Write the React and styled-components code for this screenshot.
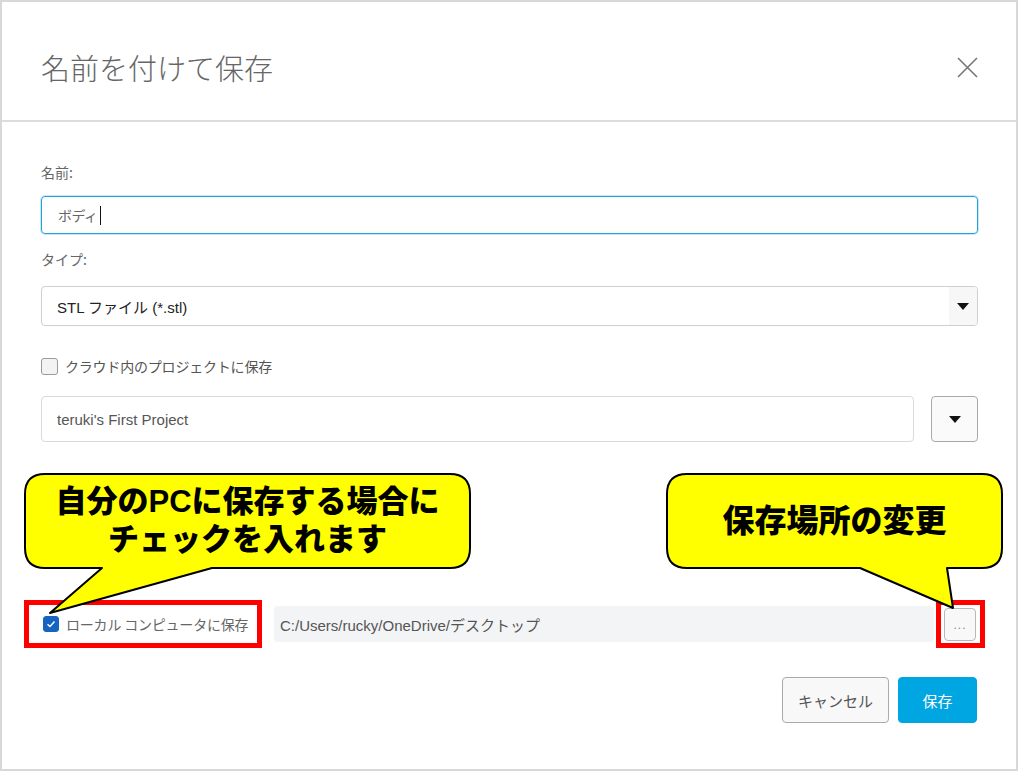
import React from "react";
import styled, { createGlobalStyle } from "styled-components";

const GlobalStyle = createGlobalStyle`
  html, body {
    margin: 0;
    padding: 0;
    background: #ffffff;
  }
  body {
    font-family: "Liberation Sans", "Noto Sans CJK JP", sans-serif;
  }
  * {
    box-sizing: border-box;
  }
`;

const Page = styled.div`
  position: relative;
  width: 1019px;
  height: 773px;
  overflow: hidden;
`;

const Frame = styled.div`
  width: 1018px;
  height: 771px;
  border: 2px solid #d8d8d8;
  background: #fff;
  display: flex;
  flex-direction: column;
`;

const Header = styled.div`
  height: 120px;
  flex-shrink: 0;
  border-bottom: 2px solid #dcdcdc;
  display: flex;
  align-items: center;
  justify-content: space-between;
  padding: 12px 38px 0 39px;
`;

const Title = styled.h1`
  margin: 0;
  font-family: "Noto Sans CJK JP", sans-serif;
  font-weight: 300;
  font-size: 29px;
  color: #666;
`;

const CloseButton = styled.button`
  width: 22px;
  height: 22px;
  padding: 0;
  border: none;
  background: none;
  display: flex;
  align-items: center;
  justify-content: center;
`;

const Body = styled.div`
  flex: 1;
  display: flex;
  flex-direction: column;
  padding: 40px 38px 0 39px;
`;

const Label = styled.div`
  font-family: "Noto Sans CJK JP", sans-serif;
  font-size: 14px;
  line-height: 20px;
  color: #666;
  margin-top: ${(p) => p.$mt || 0}px;
`;

const TextBox = styled.div`
  margin-top: 14px;
  height: 38px;
  border: 1px solid #22a2dc;
  border-radius: 4px;
  box-shadow: 0 0 0 1px rgba(34, 162, 220, 0.25);
  display: flex;
  align-items: center;
  padding-left: 16px;
  font-family: "Noto Sans CJK JP", sans-serif;
  font-size: 14px;
  letter-spacing: -0.5px;
  color: #666;
`;

const Caret = styled.span`
  display: inline-block;
  width: 1px;
  height: 19px;
  background: #111;
  margin-left: 2px;
`;

const Select = styled.div`
  margin-top: 17px;
  height: 40px;
  border: 1px solid #cfcfcf;
  border-radius: 4px;
  display: flex;
  align-items: stretch;
  overflow: hidden;
`;

const SelectText = styled.div`
  flex: 1;
  display: flex;
  align-items: center;
  padding-left: 15px;
  font-size: 15px;
  color: #222;
`;

const SelectArrow = styled.div`
  width: 28px;
  background: #f7f7f7;
  display: flex;
  align-items: center;
  justify-content: center;
`;

const Triangle = styled.span`
  width: 0;
  height: 0;
  border-left: 6px solid transparent;
  border-right: 6px solid transparent;
  border-top: 7px solid #111;
`;

const CheckRow = styled.label`
  display: flex;
  align-items: center;
  gap: 7px;
  height: 20px;
  flex-shrink: 0;
  width: ${(p) => (p.$w ? `${p.$w}px` : "auto")};
  margin-top: ${(p) => p.$mt || 0}px;
  font-family: "Noto Sans CJK JP", sans-serif;
  font-size: 14px;
  letter-spacing: -0.2px;
  color: ${(p) => (p.$muted ? "#666" : "#555")};
  white-space: nowrap;
`;

const Box = styled.span`
  width: ${(p) => (p.$checked ? 16 : 17)}px;
  height: ${(p) => (p.$checked ? 16 : 17)}px;
  border-radius: 3px;
  border: 1px solid ${(p) => (p.$checked ? "#1565c0" : "#9a9a9a")};
  background: ${(p) => (p.$checked ? "#1565c0" : "#f3f3f3")};
  display: flex;
  align-items: center;
  justify-content: center;
  flex-shrink: 0;
`;

const ProjectRow = styled.div`
  margin-top: 20px;
  display: flex;
  gap: 17px;
  height: 46px;
`;

const ProjectField = styled.div`
  flex: 1;
  border: 1px solid #dadada;
  border-radius: 4px;
  display: flex;
  align-items: center;
  padding-left: 15px;
  font-size: 15px;
  color: #555;
`;

const IconButton = styled.button`
  width: 47px;
  border: 1px solid #a9a9a9;
  border-radius: 4px;
  background: #fafafa;
  display: flex;
  align-items: center;
  justify-content: center;
  padding: 0;
`;

const LocalRow = styled.div`
  margin-top: 164px;
  height: 36px;
  display: flex;
  align-items: center;
  padding: 0 2px 0 2px;
`;

const PathField = styled.div`
  flex: 1;
  height: 36px;
  background: #f3f4f6;
  border-radius: 4px;
  display: flex;
  align-items: center;
  padding-left: 6px;
  font-size: 15px;
  color: #555;
  white-space: nowrap;
`;

const BrowseButton = styled.button`
  margin-left: 10px;
  width: 32px;
  height: 33px;
  flex-shrink: 0;
  border: 1px solid #b8b8b8;
  border-radius: 4px;
  background: #f8f8f8;
  color: #888;
  font-size: 12px;
  letter-spacing: 1px;
  padding: 2px 0 0;
  font-family: "Liberation Sans", sans-serif;
`;

const Footer = styled.div`
  margin-top: 35px;
  display: flex;
  justify-content: flex-end;
  gap: 9px;
  padding-right: 1px;
`;

const Button = styled.button`
  height: 46px;
  width: ${(p) => p.$w}px;
  border-radius: 4px;
  border: 1px solid ${(p) => (p.$primary ? "#00a6e2" : "#aaaaaa")};
  background: ${(p) => (p.$primary ? "#00a6e2" : "#f8f8f8")};
  color: ${(p) => (p.$primary ? "#fff" : "#555")};
  font-family: "Noto Sans CJK JP", sans-serif;
  font-size: 15px;
  padding: 0;
`;

/* annotation layer */

const Overlay = styled.svg`
  position: absolute;
  left: 0;
  top: 0;
  pointer-events: none;
`;

const RedBox = styled.div`
  position: absolute;
  left: ${(p) => p.$x}px;
  top: ${(p) => p.$y}px;
  width: ${(p) => p.$w}px;
  height: ${(p) => p.$h}px;
  border: 5px solid #ff0000;
  pointer-events: none;
`;

const CalloutText = styled.div`
  position: absolute;
  left: ${(p) => p.$x}px;
  top: ${(p) => p.$y}px;
  width: ${(p) => p.$w}px;
  height: ${(p) => p.$h}px;
  display: flex;
  align-items: center;
  justify-content: center;
  text-align: center;
  font-family: "Liberation Sans", "Noto Sans CJK JP", sans-serif;
  font-weight: 900;
  font-size: ${(p) => p.$size}px;
  line-height: 38px;
  color: #000;
  white-space: nowrap;
`;

const Check = () => (
  <svg width="10" height="8" viewBox="0 0 10 8">
    <path d="M1.5 4.2 L4 6.5 L8.5 1.5" fill="none" stroke="#fff" strokeWidth="1.4" />
  </svg>
);

const App = () => {
  return (
    <Page>
      <GlobalStyle />
      <Frame>
        <Header>
          <Title>名前を付けて保存</Title>
          <CloseButton aria-label="閉じる">
            <svg width="21" height="21" viewBox="0 0 21 21">
              <path d="M1 1 L20 20 M20 1 L1 20" stroke="#777" strokeWidth="1.6" />
            </svg>
          </CloseButton>
        </Header>
        <Body>
          <Label>名前:</Label>
          <TextBox>
            ボディ
            <Caret />
          </TextBox>
          <Label $mt={15}>タイプ:</Label>
          <Select>
            <SelectText>STL ファイル (*.stl)</SelectText>
            <SelectArrow>
              <Triangle />
            </SelectArrow>
          </Select>
          <CheckRow $mt={30}>
            <Box />
            クラウド内のプロジェクトに保存
          </CheckRow>
          <ProjectRow>
            <ProjectField>teruki's First Project</ProjectField>
            <IconButton>
              <Triangle />
            </IconButton>
          </ProjectRow>
          <LocalRow>
            <CheckRow $muted $w={231}>
              <Box $checked>
                <Check />
              </Box>
              ローカル コンピュータに保存
            </CheckRow>
            <PathField>C:/Users/rucky/OneDrive/デスクトップ</PathField>
            <BrowseButton>...</BrowseButton>
          </LocalRow>
          <Footer>
            <Button $w={107}>キャンセル</Button>
            <Button $w={79} $primary>
              保存
            </Button>
          </Footer>
        </Body>
      </Frame>

      <RedBox $x={24} $y={600} $w={238} $h={48} />
      <RedBox $x={936} $y={600} $w={49} $h={48} />

      <Overlay width="1019" height="773" viewBox="0 0 1019 773">
        <path
          d="M45 474 H450 Q470 474 470 494 V548 Q470 568 450 568 H212 L50 613 L102 568 H45 Q25 568 25 548 V494 Q25 474 45 474 Z"
          fill="#ffff00"
          stroke="#000"
          strokeWidth="2"
          strokeLinejoin="round"
        />
        <path
          d="M687 474 H982 Q1002 474 1002 494 V548 Q1002 568 982 568 H947 L953 608 L860 568 H687 Q667 568 667 548 V494 Q667 474 687 474 Z"
          fill="#ffff00"
          stroke="#000"
          strokeWidth="2"
          strokeLinejoin="round"
        />
      </Overlay>
      <CalloutText $x={25} $y={474} $w={445} $h={94} $size={31}>
        自分のPCに保存する場合に
        <br />
        チェックを入れます
      </CalloutText>
      <CalloutText $x={667} $y={474} $w={335} $h={94} $size={32}>
        保存場所の変更
      </CalloutText>
    </Page>
  );
};

export default App;
